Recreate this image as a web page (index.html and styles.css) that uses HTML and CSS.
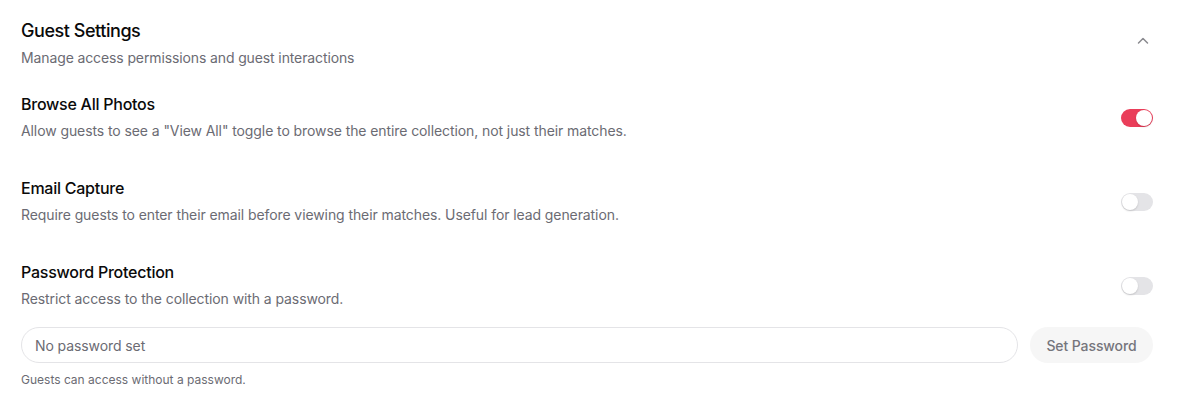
FILE: index.html
```html
<!DOCTYPE html>
<html lang="en">
<head>
<meta charset="utf-8">
<title>Guest Settings</title>
<link rel="stylesheet" href="styles.css">
</head>
<body>
<section class="panel">
  <header class="panel-head">
    <div>
      <h2 class="panel-title">Guest Settings</h2>
      <p class="panel-sub">Manage access permissions and guest interactions</p>
    </div>
    <svg class="chevron" width="16" height="16" viewBox="0 0 16 16" fill="none" stroke="#8a8a8f" stroke-width="1.5" stroke-linecap="round" stroke-linejoin="round"><path d="M3.5 10 L8 5.5 L12.5 10"/></svg>
  </header>

  <div class="setting">
    <div class="setting-text">
      <h3 class="setting-title">Browse All Photos</h3>
      <p class="setting-desc">Allow guests to see a "View All" toggle to browse the entire collection, not just their matches.</p>
    </div>
    <span class="toggle on"><span class="knob"></span></span>
  </div>

  <div class="setting">
    <div class="setting-text">
      <h3 class="setting-title">Email Capture</h3>
      <p class="setting-desc">Require guests to enter their email before viewing their matches. Useful for lead generation.</p>
    </div>
    <span class="toggle"><span class="knob"></span></span>
  </div>

  <div class="setting">
    <div class="setting-text">
      <h3 class="setting-title">Password Protection</h3>
      <p class="setting-desc">Restrict access to the collection with a password.</p>
    </div>
    <span class="toggle"><span class="knob"></span></span>
  </div>

  <div class="pw-row">
    <input class="pw-input" type="text" placeholder="No password set">
    <button class="pw-btn" type="button">Set Password</button>
  </div>
  <p class="pw-help">Guests can access without a password.</p>
</section>
</body>
</html>
```

FILE: styles.css
```css
* { box-sizing: border-box; }
html, body { margin: 0; background: #fff; }
body {
  font-family: Inter, "Noto Sans", "Liberation Sans", sans-serif;
  color: #111;
  -webkit-font-smoothing: antialiased;
}
.panel {
  padding: 17px 47px 0 21px;
}
.panel-head {
  display: flex;
  align-items: center;
  justify-content: space-between;
}
.panel-title {
  margin: 0;
  font-size: 18px;
  line-height: 28px;
  font-weight: 500;
  color: #0a0a0a;
  letter-spacing: -0.45px;
}
.panel-sub {
  margin: 1px 0 0;
  font-size: 14px;
  line-height: 24px;
  color: #6b6b73;
  letter-spacing: -0.12px;
}
.chevron { margin: 0 2px 5px 0; }
.setting {
  display: flex;
  align-items: center;
  justify-content: space-between;
  margin-top: 22px;
}
.setting + .setting { margin-top: 33px; }
.setting-title {
  margin: 0;
  font-size: 16px;
  line-height: 24px;
  font-weight: 500;
  color: #0a0a0a;
  letter-spacing: -0.25px;
}
.setting-desc {
  margin: 3px 0 0;
  font-size: 14px;
  line-height: 24px;
  color: #6b6b73;
  letter-spacing: -0.09px;
}
.toggle {
  position: relative;
  width: 32px;
  height: 18px;
  border-radius: 9px;
  background: #e4e4e7;
  flex: none;
}
.toggle.on { background: #ea3e5a; }
.knob {
  position: absolute;
  top: 1px;
  left: 1px;
  width: 16px;
  height: 16px;
  border-radius: 50%;
  background: #fff;
  box-shadow: 0 1px 2px rgba(0,0,0,0.15);
}
.toggle.on .knob { left: 15px; }
.pw-row {
  display: flex;
  gap: 12px;
  margin-top: 16px;
}
.pw-input {
  flex: 1;
  height: 36px;
  border: 1px solid #e4e4e7;
  border-radius: 18px;
  padding: 0 13px;
  font: inherit;
  font-size: 14px;
  color: #111;
  outline: none;
}
.pw-input::placeholder { color: #6b6b73; letter-spacing: -0.09px; }
.pw-btn {
  height: 36px;
  border: none;
  border-radius: 18px;
  background: #f6f6f6;
  color: #75757c;
  font: inherit;
  font-size: 14px;
  font-weight: 500;
  padding: 0;
  width: 123px;
  white-space: nowrap;
  letter-spacing: -0.1px;
}
.pw-help {
  margin: 7px 0 0;
  font-size: 12px;
  line-height: 20px;
  color: #6b6b73;
}
```
